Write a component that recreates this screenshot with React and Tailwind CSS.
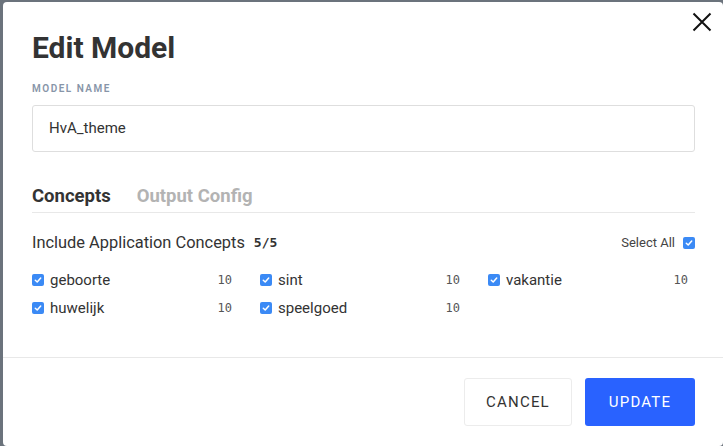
import React from 'react';

const concepts = [
    { name: 'geboorte', count: 10 },
    { name: 'sint', count: 10 },
    { name: 'vakantie', count: 10 },
    { name: 'huwelijk', count: 10 },
    { name: 'speelgoed', count: 10 },
];

const Check = () => (
    <span className="inline-flex h-[12px] w-[12px] shrink-0 items-center justify-center rounded-[2px] bg-[#3b8af5]">
        <svg width="8" height="8" viewBox="0 0 8 8" fill="none">
            <path d="M1.3 4.2 L3.2 6 L6.7 2" stroke="white" strokeWidth="1.5" strokeLinecap="round" strokeLinejoin="round" />
        </svg>
    </span>
);

const App = () => {
    return (
        <div
            className="h-[446px] w-[723px] overflow-hidden bg-[#6b737c] pl-[3px] pt-[2px]"
            style={{ fontFamily: 'Roboto, "Liberation Sans", sans-serif' }}
        >
            <div className="relative flex h-full flex-col rounded-[4px] bg-white">
                {/* close */}
                <button className="absolute right-[10px] top-[9px] p-[1px]">
                    <svg width="20" height="20" viewBox="0 0 20 20" fill="none">
                        <path d="M1.5 1.5 L18.5 18.5 M18.5 1.5 L1.5 18.5" stroke="#111" strokeWidth="2" />
                    </svg>
                </button>

                <div className="flex-1 pl-[29px] pr-[28px] pt-[29px]">
                    <h2 className="text-[30px] font-bold leading-[34px] text-[#333]">Edit Model</h2>

                    <div className="mt-[17px] text-[10px] font-semibold leading-[14px] tracking-[0.15em] text-[#8795a8]">
                        MODEL NAME
                    </div>
                    <div className="mt-[9px] flex h-[47px] items-center rounded-[3px] border border-[#dedede] px-[16px] text-[15px] text-[#333]">
                        HvA_theme
                    </div>

                    {/* tabs */}
                    <div className="mt-[32px] flex gap-[26px] border-b border-[#e8e8e8] pb-[4px] text-[18.5px] font-bold leading-[24px]">
                        <span className="text-[#333]">Concepts</span>
                        <span className="text-[#b3b3b3]">Output Config</span>
                    </div>

                    <div className="mt-[20px] flex h-[20px] items-center justify-between">
                        <div className="flex items-center gap-[9px] text-[16.4px] text-[#333]">
                            <span>Include Application Concepts</span>
                            <span className="text-[13px] font-bold" style={{ fontFamily: '"DejaVu Sans Mono", "Liberation Mono", monospace' }}>5/5</span>
                        </div>
                        <div className="flex items-center gap-[8px] text-[13px] text-[#444]">
                            <span>Select All</span>
                            <Check />
                        </div>
                    </div>

                    <div className="mt-[13px] grid grid-cols-[200px_200px_200px] gap-x-[28px]">
                        {concepts.map((c) => (
                            <div key={c.name} className="flex h-[28px] items-center justify-between">
                                <div className="flex items-center gap-[6px] text-[15px] text-[#333]">
                                    <Check />
                                    <span>{c.name}</span>
                                </div>
                                <span
                                    className="text-[12px] text-[#555]"
                                    style={{ fontFamily: '"DejaVu Sans Mono", "Liberation Mono", monospace' }}
                                >
                                    {c.count}
                                </span>
                            </div>
                        ))}
                    </div>
                </div>

                {/* footer */}
                <div className="flex justify-end gap-[13px] border-t border-[#e8e8e8] pb-[20px] pr-[28px] pt-[20px]">
                    <button className="h-[48px] w-[108px] rounded-[3px] border border-[#ececec] bg-white text-[15px] tracking-[0.08em] text-[#333]">
                        CANCEL
                    </button>
                    <button className="h-[48px] w-[110px] rounded-[3px] bg-[#2962ff] text-[15px] tracking-[0.08em] text-white">
                        UPDATE
                    </button>
                </div>
            </div>
        </div>
    );
};

export default App;
